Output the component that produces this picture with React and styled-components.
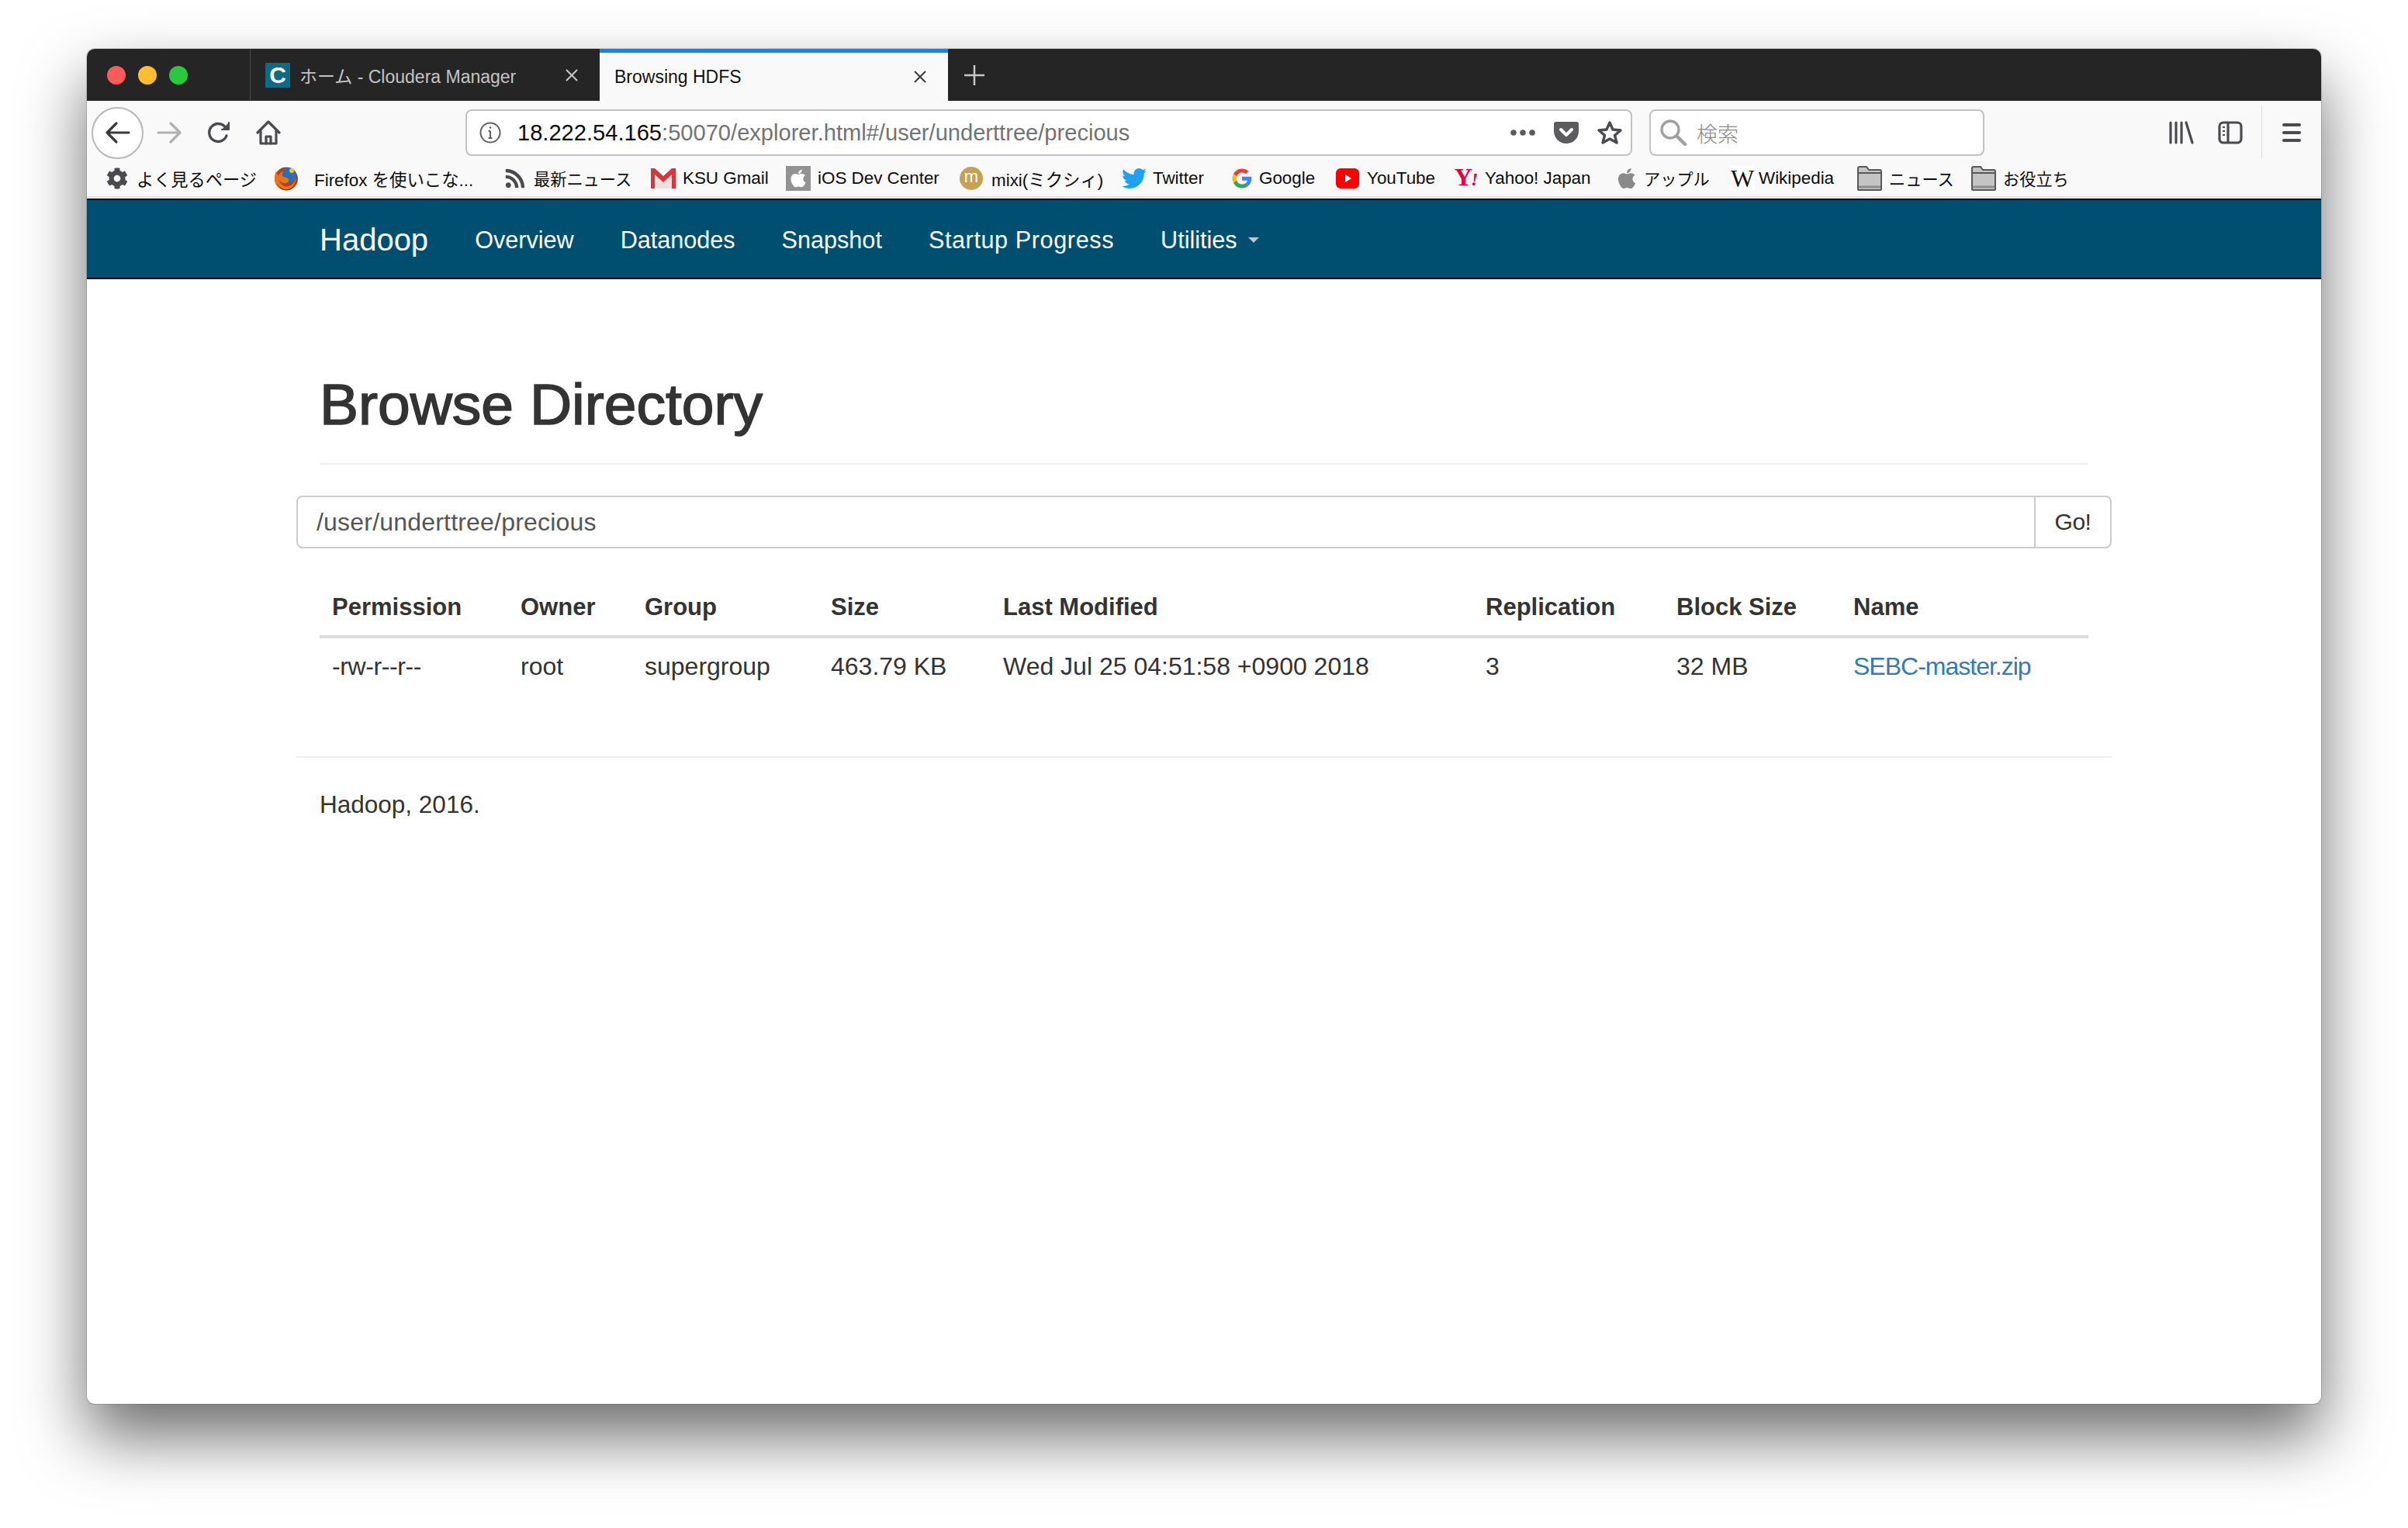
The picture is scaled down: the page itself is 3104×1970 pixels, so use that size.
import styled, { createGlobalStyle } from 'styled-components'
import { FaApple, FaCog, FaRss, FaTwitter } from 'react-icons/fa'

const GlobalStyle = createGlobalStyle`
  html, body { margin: 0; padding: 0; background: #fff; }
  body { font-family: "Liberation Sans", "Noto Sans CJK JP", sans-serif; color: #333; }
  * { box-sizing: border-box; }
`

const sansJp = `"Liberation Sans", "Noto Sans CJK JP", sans-serif`

const Desktop = styled.div`
  width: 3104px;
  height: 1970px;
  padding: 63px 112px 160px;
  overflow: hidden;
`
const Win = styled.div`
  width: 2880px;
  height: 1747px;
  border-radius: 10px;
  overflow: hidden;
  background: #fff;
  box-shadow: 0 42px 84px rgba(0, 0, 0, 0.58), 0 0 0 1px rgba(0, 0, 0, 0.15);
`

/* tab strip */
const TabStrip = styled.div`
  height: 67px;
  background: #252525;
  display: flex;
  align-items: stretch;
`
const Lights = styled.div`
  width: 211px;
  padding-left: 26px;
  display: flex;
  align-items: center;
  gap: 16px;
  border-right: 1px solid #4a4a4a;
`
const Light = styled.span`
  width: 24px;
  height: 24px;
  border-radius: 50%;
  background: ${p => p.$c};
`
const Tab = styled.div`
  width: ${p => p.$w}px;
  display: flex;
  align-items: center;
  padding: 0 26px 0 ${p => p.$pl}px;
  font-size: 23px;
  font-family: ${sansJp};
  background: ${p => (p.$active ? '#f9f9fa' : 'transparent')};
  color: ${p => (p.$active ? '#111' : '#c4c4c4')};
  border-top: ${p => (p.$active ? '5px solid #0a84ff' : 'none')};
`
const TabTitle = styled.span`
  flex: 1;
  white-space: nowrap;
`
const TabFavicon = styled.span`
  width: 32px;
  height: 32px;
  margin-right: 12px;
  background: #0f6a86;
  color: #fff;
  font: bold 30px/32px "Liberation Sans", sans-serif;
  text-align: center;
`
const NewTab = styled.div`
  width: 68px;
  display: flex;
  align-items: center;
  justify-content: center;
`

/* toolbar */
const Toolbar = styled.div`
  height: 82px;
  background: #f9f9fa;
  display: flex;
  align-items: center;
  padding-left: 6px;
`
const BackBtn = styled.div`
  width: 67px;
  height: 67px;
  border-radius: 50%;
  border: 2px solid #b8b8b8;
  background: #fff;
  display: flex;
  align-items: center;
  justify-content: center;
`
const NavBtns = styled.div`
  display: flex;
  align-items: center;
  gap: 24px;
  margin: 0 234px 0 13px;
`
const ToolIcon = styled.div`
  flex: none;
  width: 40px;
  height: 40px;
  margin-left: ${p => p.$ml || 0}px;
  display: flex;
  align-items: center;
  justify-content: center;
`
const Field = styled.div`
  height: 60px;
  width: ${p => p.$w}px;
  margin-left: ${p => p.$ml || 0}px;
  background: #fff;
  border: 2px solid #c2c2c2;
  border-radius: 8px;
  display: flex;
  align-items: center;
`
const UrlText = styled.div`
  flex: 1;
  margin-left: 15px;
  font-size: 29.1px;
  white-space: nowrap;
  color: #0c0c0d;
  span { color: #737373; }
`
const UrlActions = styled.div`
  display: flex;
  align-items: center;
  gap: 24px;
  padding-right: 11px;
`
const SearchHint = styled.span`
  margin-left: 10px;
  font-size: 27px;
  color: #8a8a8a;
  font-family: "Noto Sans CJK JP", sans-serif;
  font-weight: 300;
`
const ToolRight = styled.div`
  margin-left: auto;
  display: flex;
  align-items: center;
  padding-right: 18px;
`
const ToolDivider = styled.span`
  width: 1px;
  height: 68px;
  background: #dcdcdc;
  margin: 0 18px 0 20px;
`

/* bookmarks */
const Bookmarks = styled.div`
  height: 44px;
  background: #f9f9fa;
  border-bottom: 3px solid #e4e4e6;
  display: flex;
  align-items: center;
  padding: 0 0 6px 25px;
`
const Bookmark = styled.div`
  flex: none;
  width: ${p => p.$w}px;
  display: flex;
  align-items: center;
  gap: ${p => p.$gap || 9}px;
  font-size: ${p => p.$size || 22.4}px;
  font-family: ${sansJp};
  color: #0c0c0d;
  white-space: nowrap;
`
const FavSlot = styled.span`
  flex: none;
  width: ${p => p.$w || 32}px;
  height: 32px;
  display: flex;
  align-items: center;
  justify-content: center;
`
const AppleTile = styled(FavSlot)`
  background: #929292;
  color: #fff;
`
const MixiBadge = styled.span`
  width: 30px;
  height: 30px;
  border-radius: 50%;
  background: #c7a052;
  color: #fff;
  font-size: 22px;
  line-height: 26px;
  text-align: center;
`
const YahooMark = styled.span`
  font: bold 32px/32px "Liberation Serif", serif;
  color: #e3003c;
  letter-spacing: -2px;
  em { font-size: 24px; }
`
const WikiMark = styled.span`
  width: 32px;
  font: 32px/32px "Liberation Serif", serif;
  color: #111;
  background: #fff;
  text-align: center;
`

/* hadoop page */
const Navbar = styled.nav`
  height: 104px;
  background: #004e70;
  border-top: 2px solid #0b0b0b;
  border-bottom: 2px solid #0b0b0b;
  display: flex;
  justify-content: center;
`
const NavInner = styled.div`
  width: 2340px;
  padding-top: 2px;
  display: flex;
  align-items: center;
  color: #fff;
`
const Brand = styled.a`
  font-size: 40px;
  padding: 0 30px;
`
const NavLink = styled.a`
  font-size: 30.6px;
  letter-spacing: ${p => p.$ls || 0}px;
  padding: 0 30px;
  display: flex;
  align-items: center;
  gap: 14px;
`
const Caret = styled.span`
  width: 0;
  height: 0;
  border-top: 7px solid rgba(255, 255, 255, 0.7);
  border-left: 7px solid transparent;
  border-right: 7px solid transparent;
`
const Container = styled.main`
  width: 2340px;
  margin: 0 auto;
`
const PageHeader = styled.div`
  margin: 0 30px 40px;
  padding: 122px 0 36px;
  border-bottom: 2px solid #eee;
`
const Title = styled.h1`
  margin: 0;
  font-size: 75px;
  line-height: 79px;
  font-weight: 500;
  color: #333;
  -webkit-text-stroke: 1.6px #333;
`
const InputGroup = styled.div`
  height: 68px;
  display: flex;
  border: 2px solid #ccc;
  border-radius: 8px;
`
const PathInput = styled.div`
  flex: 1;
  display: flex;
  align-items: center;
  padding-left: 24px;
  font-size: 32px;
  letter-spacing: 0.2px;
  color: #555;
`
const GoBtn = styled.div`
  width: 98px;
  display: flex;
  align-items: center;
  justify-content: center;
  border-left: 2px solid #ccc;
  font-size: 30px;
  letter-spacing: -0.5px;
  color: #333;
`
const Table = styled.table`
  width: 2280px;
  margin: 40px 30px 0;
  border-collapse: collapse;
  table-layout: fixed;
  font-size: 32px;
`
const Col = styled.col`
  width: ${p => p.$w}px;
`
const Th = styled.th`
  text-align: left;
  font-size: 31px;
  font-weight: 700;
  padding: 16px;
  line-height: 40px;
  border-bottom: 4px solid #ddd;
  white-space: nowrap;
`
const Td = styled.td`
  padding: 16px;
  line-height: 40px;
  white-space: nowrap;
`
const Perm = styled.span`
  letter-spacing: -0.4px;
`
const FileLink = styled.a`
  color: #337ab7;
  letter-spacing: -1px;
`
const Rule = styled.hr`
  margin: 80px 0 0;
  border: none;
  border-top: 2px solid #eee;
`
const Footer = styled.p`
  margin: 40px 30px 0;
  font-size: 31.5px;
  line-height: 40px;
`

const columns = [
  ['Permission', 243, <Perm>-rw-r--r--</Perm>],
  ['Owner', 160, 'root'],
  ['Group', 240, 'supergroup'],
  ['Size', 222, '463.79 KB'],
  ['Last Modified', 622, 'Wed Jul 25 04:51:58 +0900 2018'],
  ['Replication', 246, '3'],
  ['Block Size', 228, '32 MB'],
  ['Name', 319, <FileLink>SEBC-master.zip</FileLink>],
]

const CloseIcon = ({ color }) => (
  <svg width="20" height="20" viewBox="0 0 20 20" stroke={color} strokeWidth="2" fill="none">
    <path d="M3 3l14 14M17 3L3 17" />
  </svg>
)

const FirefoxIcon = () => (
  <svg width="32" height="32" viewBox="0 0 32 32">
    <circle cx="16" cy="16.500" r="15" fill="#b8400f" />
    <circle cx="19" cy="12" r="10" fill="#2a6fb5" />
    <path d="M3 6c0 3 1 5 3 6 1-3 4-5 7-5-2 2-3 4-2 6 2 2 6 1 8 4 1 3-2 6-6 5-3 0-5-2-6-5 0 6 6 11 12 9 5-1 9-6 9-12 1 9-5 17-13 17C7 31 1 25 1 16c0-4 1-7 2-10z" fill="#e8741e" />
    <path d="M4 22c3 6 9 9 15 8 3-1 5-2 7-4-3 5-8 6-12 5-5-1-8-4-10-9z" fill="#8c2f12" />
    <circle cx="23" cy="6" r="3" fill="#f3c33c" />
  </svg>
)

const GmailIcon = () => (
  <svg width="32" height="26" viewBox="0 0 32 26">
    <rect width="32" height="26" fill="#fff" />
    <path d="M5 8v18h22V8L16 18z" fill="#f1dede" />
    <path d="M0 0h5l11 10L27 0h5v26h-5V8L16 18 5 8v18H0z" fill="#d6373c" />
  </svg>
)

const GoogleIcon = () => (
  <svg width="26" height="26" viewBox="0 0 48 48">
    <path fill="#ea4335" d="M24 10c3.500 0 6.500 1.200 8.900 3.400l6.600-6.600C35.400 3 30.100 1 24 1 15 1 7.300 6.100 3.600 13.600l7.700 6C13 14.200 18 10 24 10z" />
    <path fill="#4285f4" d="M46.500 24.500c0-1.600-.1-3-.4-4.500H24v9h12.700c-.6 2.900-2.200 5.300-4.700 7l7.300 5.700c4.300-4 7.200-9.800 7.200-17.200z" />
    <path fill="#fbbc05" d="M11.300 28.400c-.5-1.400-.8-2.900-.8-4.400s.3-3 .8-4.400l-7.700-6C2 16.800 1 20.300 1 24s1 7.200 2.600 10.400z" />
    <path fill="#34a853" d="M24 47c6.200 0 11.400-2 15.300-5.600L32 35.700c-2 1.400-4.700 2.300-8 2.300-6 0-11-4.200-12.700-9.600l-7.700 6C7.300 41.900 15 47 24 47z" />
  </svg>
)

const YouTubeIcon = () => (
  <svg width="30" height="26" viewBox="0 0 30 26">
    <rect width="30" height="26" rx="6" fill="#f00" />
    <path d="M12 8l8 5-8 5z" fill="#fff" />
  </svg>
)

const FolderIcon = () => (
  <svg width="32" height="32" viewBox="0 0 32 32">
    <path d="M1 30V3c0-1 1-2 2-2h9l3 4h14c1 0 2 1 2 2v23c0 1-1 1-2 1H3c-1 0-2 0-2-1z" fill="#c4c4c4" stroke="#58585c" strokeWidth="2" />
    <path d="M2 9h28" stroke="#58585c" strokeWidth="2" />
    <path d="M2 27h28" stroke="#8e8e8e" strokeWidth="3" />
  </svg>
)

const ArrowIcon = ({ color, flip }) => (
  <svg width="34" height="30" viewBox="0 0 34 30" fill="none" stroke={color} strokeWidth="3.200" strokeLinecap="round" strokeLinejoin="round" style={flip ? { transform: 'scaleX(-1)' } : undefined}>
    <path d="M3 15h28M15 3L3 15l12 12" />
  </svg>
)

const ReloadIcon = () => (
  <svg width="32" height="32" viewBox="0 0 32 32" fill="none" stroke="#4a4a4f" strokeWidth="3.400" strokeLinecap="round" strokeLinejoin="round">
    <path d="M26 20a11.500 11.500 0 1 1-2-11.500L28 11" />
    <path d="M29 3v9h-9" fill="#4a4a4f" strokeWidth="2" />
  </svg>
)

const HomeIcon = () => (
  <svg width="32" height="32" viewBox="0 0 32 32" fill="none" stroke="#4a4a4f" strokeWidth="3.200" strokeLinejoin="round" strokeLinecap="round">
    <path d="M2 16L16 2l14 14" />
    <path d="M6 13v17h20V13" />
    <path d="M13 30v-9h6v9" />
  </svg>
)

const InfoIcon = () => (
  <svg width="28" height="28" viewBox="0 0 28 28" fill="none" stroke="#606060" strokeWidth="2">
    <circle cx="14" cy="14" r="12.500" />
    <path d="M14 12v9M11.500 21h5M11.500 12H14" />
    <circle cx="14" cy="7.500" r="1.300" fill="#606060" stroke="none" />
  </svg>
)

const DotsIcon = () => (
  <svg width="32" height="8" viewBox="0 0 32 8" fill="#5c5c5f">
    <circle cx="4" cy="4" r="3.800" />
    <circle cx="16" cy="4" r="3.800" />
    <circle cx="28" cy="4" r="3.800" />
  </svg>
)

const PocketIcon = () => (
  <svg width="32" height="28" viewBox="0 0 32 28">
    <path d="M3 0h26c2 0 3 1 3 3v9c0 9-7 16-16 16S0 21 0 12V3c0-2 1-3 3-3z" fill="#5c5c5f" />
    <path d="M9 10l7 7 7-7" fill="none" stroke="#fff" strokeWidth="4" strokeLinecap="round" strokeLinejoin="round" />
  </svg>
)

const StarIcon = () => (
  <svg width="32" height="32" viewBox="0 0 32 32" fill="none" stroke="#4a4a4f" strokeWidth="3.400" strokeLinejoin="round">
    <path d="M16 3l4 9 10 1-7.500 6.500L25 29l-9-5-9 5 2.500-9.500L2 13l10-1z" />
  </svg>
)

const SearchIcon = () => (
  <svg width="36" height="34" viewBox="0 0 36 34" fill="none" stroke="#a0a0a0" strokeWidth="3.400" strokeLinecap="round">
    <circle cx="14" cy="13" r="11" />
    <path d="M22 21l11 11" strokeWidth="4.500" />
  </svg>
)

const LibraryIcon = () => (
  <svg width="32" height="30" viewBox="0 0 32 30" stroke="#4a4a4f" strokeWidth="3.200" strokeLinecap="round">
    <path d="M2 2v26M9 2v26M16 2v26M22 2l8 26" />
  </svg>
)

const SidebarIcon = () => (
  <svg width="32" height="30" viewBox="0 0 32 30" fill="none" stroke="#4a4a4f" strokeWidth="3.200">
    <rect x="2" y="2" width="28" height="26" rx="5" />
    <path d="M13 2v26" />
    <path d="M6 8h3M6 13h3M6 18h3" strokeWidth="2" />
  </svg>
)

const MenuIcon = () => (
  <svg width="24" height="26" viewBox="0 0 24 26" stroke="#4a4a4f" strokeWidth="4" strokeLinecap="round">
    <path d="M2 3h20M2 13h20M2 23h20" />
  </svg>
)

const bookmarks = [
  { w: 216, gap: 11, size: 22.2, label: 'よく見るページ', icon: <FavSlot $w={28}><FaCog size={28} color="#4a4a4f" /></FavSlot> },
  { w: 297, gap: 20, label: 'Firefox を使いこな...', icon: <FavSlot><FirefoxIcon /></FavSlot> },
  { w: 189, gap: 10, size: 21.2, label: '最新ニュース', icon: <FavSlot $w={28}><FaRss size={28} color="#4a4a4f" /></FavSlot> },
  { w: 174, label: 'KSU Gmail', icon: <FavSlot><GmailIcon /></FavSlot> },
  { w: 223, label: 'iOS Dev Center', icon: <AppleTile><FaApple size={26} /></AppleTile> },
  { w: 210, gap: 10, label: 'mixi(ミクシィ)', icon: <FavSlot><MixiBadge>m</MixiBadge></FavSlot> },
  { w: 139, gap: 8, label: 'Twitter', icon: <FavSlot><FaTwitter size={32} color="#1da1f2" /></FavSlot> },
  { w: 137, gap: 6, label: 'Google', icon: <FavSlot><GoogleIcon /></FavSlot> },
  { w: 151, gap: 10, label: 'YouTube', icon: <FavSlot $w={30}><YouTubeIcon /></FavSlot> },
  { w: 211, gap: 9, label: 'Yahoo! Japan', icon: <FavSlot><YahooMark>Y<em>!</em></YahooMark></FavSlot> },
  { w: 146, gap: 9, size: 21.2, label: 'アップル', icon: <FavSlot $w={26}><FaApple size={30} color="#8a8a8a" /></FavSlot> },
  { w: 164, gap: 5, label: 'Wikipedia', icon: <FavSlot><WikiMark>W</WikiMark></FavSlot> },
  { w: 147, gap: 9, size: 21.2, label: 'ニュース', icon: <FavSlot><FolderIcon /></FavSlot> },
  { w: 130, gap: 9, size: 21.2, label: 'お役立ち', icon: <FavSlot><FolderIcon /></FavSlot> },
]

const navLinks = [
  { label: 'Overview' },
  { label: 'Datanodes' },
  { label: 'Snapshot' },
  { label: 'Startup Progress', ls: 0.6 },
]

const App = () => (
  <Desktop>
    <GlobalStyle />
    <Win>
      <TabStrip>
        <Lights>
          <Light $c="#fc5b57" />
          <Light $c="#febe2f" />
          <Light $c="#29c93f" />
        </Lights>
        <Tab $w={450} $pl={19}>
          <TabFavicon>C</TabFavicon>
          <TabTitle>ホーム - Cloudera Manager</TabTitle>
          <CloseIcon color="#c8c8c8" />
        </Tab>
        <Tab $w={449} $pl={19} $active>
          <TabTitle>Browsing HDFS</TabTitle>
          <CloseIcon color="#3a3a3a" />
        </Tab>
        <NewTab>
          <svg width="28" height="28" viewBox="0 0 28 28" stroke="#c8c8c8" strokeWidth="2.500">
            <path d="M14 1v26M1 14h26" />
          </svg>
        </NewTab>
      </TabStrip>
      <Toolbar>
        <BackBtn><ArrowIcon color="#3a3a3e" /></BackBtn>
        <NavBtns>
          <ToolIcon><ArrowIcon color="#b1b1b3" flip /></ToolIcon>
          <ToolIcon><ReloadIcon /></ToolIcon>
          <ToolIcon><HomeIcon /></ToolIcon>
        </NavBtns>
        <Field $w={1504}>
          <ToolIcon $ml={10}><InfoIcon /></ToolIcon>
          <UrlText>18.222.54.165<span>:50070/explorer.html#/user/underttree/precious</span></UrlText>
          <UrlActions>
            <DotsIcon />
            <PocketIcon />
            <StarIcon />
          </UrlActions>
        </Field>
        <Field $w={432} $ml={22}>
          <ToolIcon $ml={9}><SearchIcon /></ToolIcon>
          <SearchHint>検索</SearchHint>
        </Field>
        <ToolRight>
          <ToolIcon><LibraryIcon /></ToolIcon>
          <ToolIcon $ml={23}><SidebarIcon /></ToolIcon>
          <ToolDivider />
          <ToolIcon><MenuIcon /></ToolIcon>
        </ToolRight>
      </Toolbar>
      <Bookmarks>
        {bookmarks.map(b => (
          <Bookmark key={b.label} $w={b.w} $gap={b.gap} $size={b.size}>
            {b.icon}
            <span>{b.label}</span>
          </Bookmark>
        ))}
      </Bookmarks>
      <Navbar>
        <NavInner>
          <Brand>Hadoop</Brand>
          {navLinks.map(l => <NavLink key={l.label} $ls={l.ls}>{l.label}</NavLink>)}
          <NavLink>Utilities <Caret /></NavLink>
        </NavInner>
      </Navbar>
      <Container>
        <PageHeader>
          <Title>Browse Directory</Title>
        </PageHeader>
        <InputGroup>
          <PathInput>/user/underttree/precious</PathInput>
          <GoBtn>Go!</GoBtn>
        </InputGroup>
        <Table>
          <colgroup>
            {columns.map(c => <Col key={c[0]} $w={c[1]} />)}
          </colgroup>
          <thead>
            <tr>{columns.map(c => <Th key={c[0]}>{c[0]}</Th>)}</tr>
          </thead>
          <tbody>
            <tr>
              {columns.map(c => <Td key={c[0]}>{c[2]}</Td>)}
            </tr>
          </tbody>
        </Table>
        <Rule />
        <Footer>Hadoop, 2016.</Footer>
      </Container>
    </Win>
  </Desktop>
)

export default App
